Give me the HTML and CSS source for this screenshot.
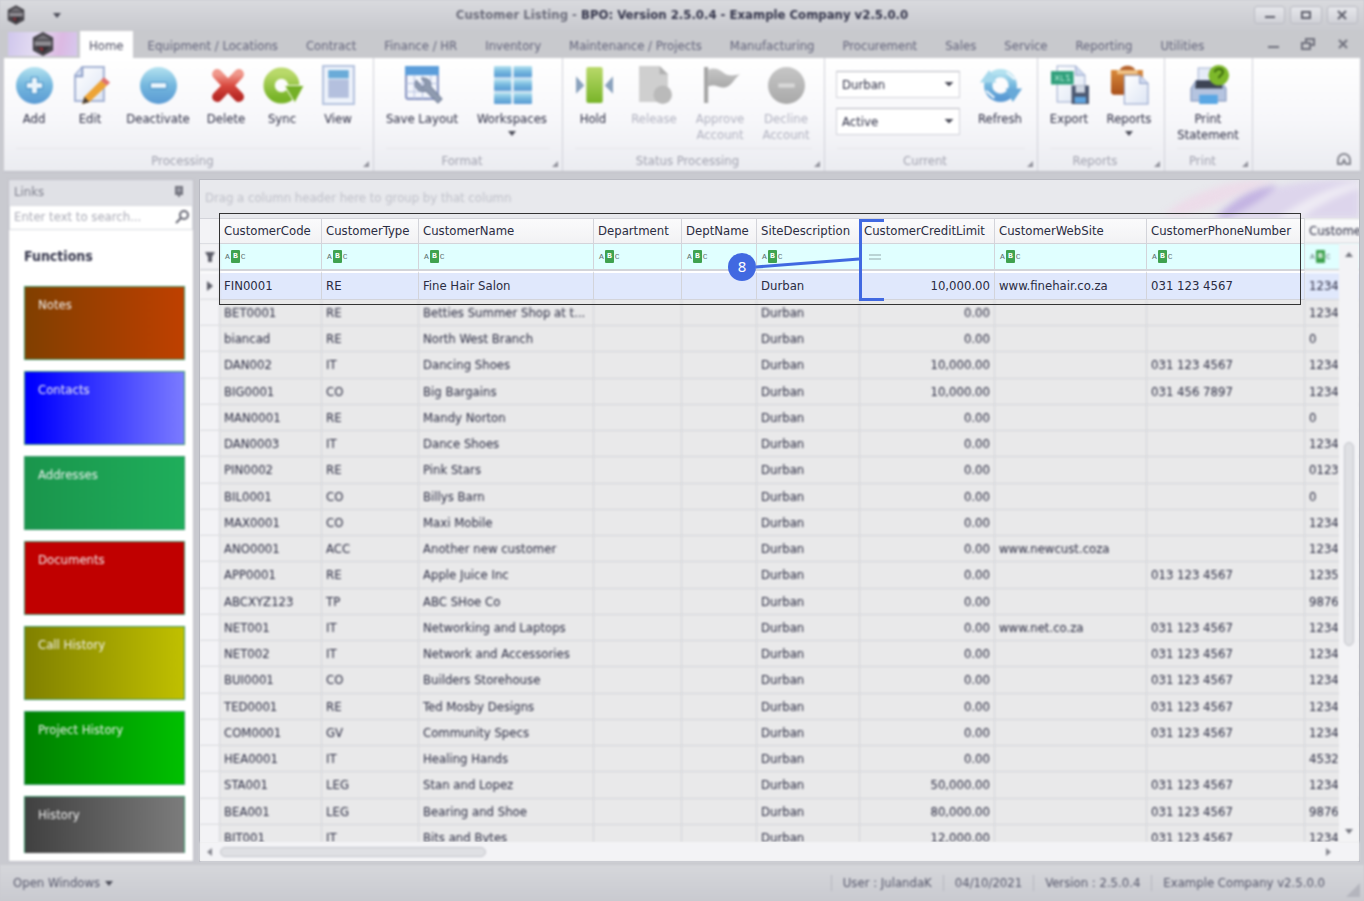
FILE: index.html
```html
<!DOCTYPE html>
<html lang="en">
<head>
<meta charset="utf-8">
<meta name="viewport" content="width=device-width, initial-scale=1">
<title>Customer Listing - BPO: Version 2.5.0.4 - Example Company v2.5.0.0</title>
<link rel="stylesheet" href="styles.css">
</head>
<body>
<svg class="defs" width="0" height="0" aria-hidden="true">
  <defs>
    <linearGradient id="blue" x1="0" y1="0" x2="0" y2="1"><stop offset="0" stop-color="#b4e2f0"/><stop offset=".5" stop-color="#74b7de"/><stop offset="1" stop-color="#5a9ad4"/></linearGradient>
    <linearGradient id="red" x1="0" y1="0" x2="0" y2="1"><stop offset="0" stop-color="#f0988c"/><stop offset=".5" stop-color="#d94a40"/><stop offset="1" stop-color="#b92a26"/></linearGradient>
    <linearGradient id="green" x1="0" y1="0" x2="0" y2="1"><stop offset="0" stop-color="#b9d96a"/><stop offset="1" stop-color="#78b428"/></linearGradient>
    <linearGradient id="paper" x1="0" y1="0" x2="1" y2="1"><stop offset="0" stop-color="#ffffff"/><stop offset="1" stop-color="#dde5f4"/></linearGradient>
    <linearGradient id="grey" x1="0" y1="0" x2="0" y2="1"><stop offset="0" stop-color="#c6c6c6"/><stop offset="1" stop-color="#a9a9a9"/></linearGradient>
    <linearGradient id="brown" x1="0" y1="0" x2="0" y2="1"><stop offset="0" stop-color="#d98a3c"/><stop offset="1" stop-color="#a9501a"/></linearGradient>
    <symbol id="hex" viewBox="0 0 24 26"><path d="M12 0 23 6v14l-11 6L1 20V6z" fill="#48464c"/><path d="M12 3 20 8H4z" fill="#77757b"/><path d="M3 10h18v5H3z" fill="#8f8d93"/><path d="M5 16h14l-7 7z" fill="#333137"/><path d="M7 17h5v4z" fill="#a03038"/></symbol>
  </defs>
</svg>

<div class="app">
  <header class="top soft">
    <div class="titlebar">
      <svg class="logo-small" aria-hidden="true"><use href="#hex"/></svg>
      <button class="quick" aria-label="Customize quick access"><i class="down"></i></button>
      <h1 class="title"><span>Customer Listing - </span>BPO: Version 2.5.0.4 - Example Company v2.5.0.0</h1>
      <div class="window-buttons">
        <button aria-label="Minimize"><svg width="12" height="10"><path d="M1 7h10" stroke="#5f606c" stroke-width="2"/></svg></button>
        <button aria-label="Maximize"><svg width="12" height="10"><path d="M2 2h8v6H2z" fill="none" stroke="#5f606c" stroke-width="2"/></svg></button>
        <button aria-label="Close"><svg width="12" height="10"><path d="M2 1l8 8M10 1 2 9" stroke="#5f606c" stroke-width="2"/></svg></button>
      </div>
    </div>
    <nav class="tabs">
      <button class="app-button" aria-label="Application menu"><svg width="24" height="24" aria-hidden="true"><use href="#hex"/></svg></button>
      <a class="tab active" href="#home">Home</a>
      <a class="tab" href="#equipment">Equipment / Locations</a>
      <a class="tab" href="#contract">Contract</a>
      <a class="tab" href="#finance">Finance / HR</a>
      <a class="tab" href="#inventory">Inventory</a>
      <a class="tab" href="#maintenance">Maintenance / Projects</a>
      <a class="tab" href="#manufacturing">Manufacturing</a>
      <a class="tab" href="#procurement">Procurement</a>
      <a class="tab" href="#sales">Sales</a>
      <a class="tab" href="#service">Service</a>
      <a class="tab" href="#reporting">Reporting</a>
      <a class="tab" href="#utilities">Utilities</a>
      <div class="child-buttons">
        <button aria-label="Minimize child"><svg width="14" height="12"><path d="M2 9h11" stroke="#6f707c" stroke-width="2"/></svg></button>
        <button aria-label="Restore child"><svg width="14" height="12"><path d="M5 4V1h8v6h-3M1 5h8v6H1z" fill="none" stroke="#6f707c" stroke-width="2"/></svg></button>
        <button aria-label="Close child"><svg width="14" height="12"><path d="M3 2l8 8M11 2l-8 8" stroke="#6f707c" stroke-width="2"/></svg></button>
      </div>
    </nav>
    <div class="ribbon">
      <section class="group g-processing">
        <div class="tools">
          <button class="tool"><svg viewBox="0 0 36 36"><circle cx="18" cy="19" r="18" fill="url(#blue)"/><path d="M15 11h6v5h5v6h-5v5h-6v-5h-5v-6h5z" fill="#e9f4fb" stroke="#4e93c8"/></svg>Add</button>
          <button class="tool"><svg viewBox="0 0 36 36"><path d="M10 1h21v33H3V9z" fill="url(#paper)" stroke="#a5b3d4" stroke-width="2"/><path d="M10 1v9H3" fill="#d5dff2" stroke="#8fa0c8" stroke-width="2"/><path d="m12 30 16-16 6 5-17 16-7 2z" fill="#eda436"/><path d="m28 14 3-3 6 5-3 3z" fill="#e0706c"/><path d="m12 30 5 5-7 2z" fill="#4b4038"/></svg>Edit</button>
          <button class="tool wide"><svg viewBox="0 0 36 36"><circle cx="18" cy="19" r="18" fill="url(#blue)"/><rect x="10" y="16" width="16" height="6" rx="1" fill="#e9f4fb" stroke="#4e93c8"/></svg>Deactivate</button>
          <button class="tool"><svg viewBox="0 0 36 36"><path d="M9 8 30 30M30 8 9 30" fill="none" stroke="url(#red)" stroke-width="10" stroke-linecap="round"/></svg>Delete</button>
          <button class="tool"><svg viewBox="0 0 36 36"><circle cx="17" cy="19" r="12" fill="none" stroke="url(#green)" stroke-width="11"/><path d="M20 19h19l-9 17z" fill="#74b026" stroke="#f4f9ea" stroke-width="1"/></svg>Sync</button>
          <button class="tool"><svg viewBox="0 0 36 36"><path d="M3 0h30v37H3z" fill="#eef3fb" stroke="#b4c2de" stroke-width="2"/><path d="M8 4h20v8H8z" fill="#6aabd8"/><path d="M8 13h20v18H8z" fill="#b4c0de"/></svg>View</button>
        </div>
        <h2>Processing</h2>
      </section>
      <section class="group g-format">
        <div class="tools">
          <button class="tool big"><svg viewBox="0 0 36 36"><rect x="2" y="1" width="31" height="31" rx="2" fill="#f3f6fc" stroke="#8592c0" stroke-width="2"/><path d="M1 0h33v9H1z" fill="#5b9dda"/><path d="M2 17h31M2 25h31M10 9v23M18 9v23M26 9v23" stroke="#b7c2e0" stroke-width="1"/><path d="M12 14a7 7 0 0 0 9 10l12 12 4-4-11-12a7 7 0 0 0-9-8l4 5-3 4z" fill="#8f9bb0" stroke="#75819a"/></svg>Save Layout</button>
          <button class="tool big"><svg viewBox="0 0 36 36"><g fill="url(#blue)"><rect x="0" y="0" width="17" height="11" rx="1"/><rect x="19" y="0" width="18" height="11" rx="1"/><rect x="0" y="13" width="17" height="11" rx="1"/><rect x="19" y="13" width="18" height="11" rx="1"/><rect x="0" y="26" width="17" height="11" rx="1"/><rect x="19" y="26" width="18" height="11" rx="1"/></g><path d="M0 12h37M0 25h37" stroke="#a9cce8" stroke-width="1"/></svg>Workspaces<i class="down"></i></button>
        </div>
        <h2>Format</h2>
      </section>
      <section class="group g-status">
        <div class="tools">
          <button class="tool"><svg viewBox="0 0 36 36"><rect x="11" y="1" width="16" height="35" rx="2" fill="url(#green)"/><path d="M1 10v17l8-8zM37 10v17l-8-8z" fill="#8aa2bd"/></svg>Hold</button>
          <button class="tool mid" disabled><svg viewBox="0 0 36 36"><path d="M3 0h20l8 8v27H3z" fill="#cfcfcf"/><path d="M23 0v8h8z" fill="#b0b0b0"/><circle cx="26" cy="28" r="9" fill="#bababa"/></svg>Release</button>
          <button class="tool mid" disabled><svg viewBox="0 0 36 36"><path d="M2 1h4v35H2z" fill="#a5a5a5"/><path d="M6 4c8-4 12 1 17 4 5 2 9 1 14 0-5 3-8 12-15 13-7 0-9-4-16-1z" fill="url(#grey)"/></svg>Approve<br>Account</button>
          <button class="tool mid" disabled><svg viewBox="0 0 36 36"><circle cx="18" cy="19" r="18" fill="url(#grey)"/><path d="M10 17h16v4H10z" fill="#d9d9d9"/></svg>Decline<br>Account</button>
        </div>
        <h2>Status Processing</h2>
      </section>
      <section class="group g-current">
        <div class="tools">
          <div class="pickers">
            <select aria-label="Branch"><option>Durban</option></select>
            <select aria-label="Status"><option>Active</option></select>
          </div>
          <button class="tool mid"><svg viewBox="0 0 36 36"><circle cx="18" cy="19" r="12" fill="none" stroke="url(#blue)" stroke-width="8"/><path d="M24 6l8 7M4 24l8 7" stroke="#f2f8fc" stroke-width="2"/><path d="M-2 16 7 4l7 12z" fill="#a5d8ec"/><path d="M23 22h16l-9 13z" fill="#68a9d8"/></svg>Refresh</button>
        </div>
        <h2>Current</h2>
      </section>
      <section class="group g-reports">
        <div class="tools">
          <button class="tool"><svg viewBox="0 0 36 36"><path d="M6 0h18l9 9v26H6z" fill="url(#paper)" stroke="#9aa9cc"/><path d="M24 0v9h9" fill="#cdd8ee" stroke="#9aa9cc"/><rect x="0" y="5" width="22" height="13" fill="#31a07c"/><path d="M4 9l4 5M8 9l-4 5M10 9v5h3M18 9h-3l3 5h-3" fill="none" stroke="#9fe0c8"/><rect x="20" y="19" width="17" height="18" fill="#4c5871"/><path d="M24 19h9v7h-9z" fill="#cfd6e2"/><path d="M23 30h11v6H23z" fill="#5fa3de"/></svg>Export</button>
          <button class="tool"><svg viewBox="0 0 36 36"><path d="M0 4h31v24H2L0 26z" fill="url(#brown)"/><path d="M8 5c2-7 14-7 16 0z" fill="#b5622c"/><path d="M6 4h20v4H6z" fill="#f0c285"/><path d="M13 9h15l8 8v20H13z" fill="url(#paper)" stroke="#8fa0c8"/><path d="M28 9v8h8" fill="#cfd9ee" stroke="#8fa0c8"/></svg>Reports<i class="down"></i></button>
        </div>
        <h2>Reports</h2>
      </section>
      <section class="group g-print">
        <div class="tools">
          <button class="tool wide"><svg viewBox="0 0 36 36"><path d="M8 2h20v16H8z" fill="#e6ecf7" stroke="#a3b2d2"/><path d="M6 14h24l5 8v12H1V22z" fill="#b5c4e0" stroke="#7d90b8"/><path d="M6 14h24l2 8H5z" fill="#3d4454"/><path d="M9 28h18v9H9z" fill="#5aa7e4"/><circle cx="28" cy="9" r="10" fill="#7db82a"/><path d="M24 6c1-4 8-4 8 0 0 3-4 3-4 6" fill="none" stroke="#3f6d10" stroke-width="2"/></svg>Print<br>Statement</button>
        </div>
        <h2>Print</h2>
      </section>
      <button class="collapse" aria-label="Collapse ribbon"><svg width="16" height="14"><path d="M2 12V8a6 6 0 0 1 12 0v4h-4l-2-4-2 4z" fill="none" stroke="#85868f" stroke-width="2"/></svg></button>
    </div>
  </header>

  <main class="main">
    <aside class="links soft">
      <div class="links-head"><h2>Links</h2><svg width="10" height="12" aria-hidden="true"><path d="M2 1h6v6H2zM1 8h8M5 8v3" fill="#9a9ba6" stroke="#74757f" stroke-width="2"/></svg></div>
      <div class="search"><input type="text" placeholder="Enter text to search..." aria-label="Search links"><svg width="14" height="14" aria-hidden="true"><circle cx="9" cy="5" r="4" fill="none" stroke="#666773" stroke-width="2"/><path d="M6 8 1 13" stroke="#666773" stroke-width="2"/></svg></div>
      <h3>Functions</h3>
      <div class="tiles">
        <button class="tile notes">Notes</button>
        <button class="tile contacts">Contacts</button>
        <button class="tile addresses">Addresses</button>
        <button class="tile documents">Documents</button>
        <button class="tile calls">Call History</button>
        <button class="tile projects">Project History</button>
        <button class="tile history">History</button>
      </div>
    </aside>

    <section class="grid">
      <div class="group-panel">
        <svg class="swoosh" viewBox="0 0 220 38" aria-hidden="true"><path d="M25 34C50 14 85 2 115 0h24c-34 10-60 26-84 32-10 4-20 4-30 2z" fill="#ecdce9"/><path d="M72 38C98 14 140 3 190 0h30v38z" fill="#ddd5ec"/><path d="M78 38C96 16 116 8 138 5c-10 12-30 24-50 33z" fill="#c3b3e2"/><path d="M138 38C165 20 190 6 220 2v6c-24 8-44 20-58 30z" fill="#eeebf4"/></svg>
        <p class="soft">Drag a column header here to group by that column</p>
      </div>
      <div class="viewport">
        <table>
          <colgroup><col class="c-mark"><col class="c-code"><col class="c-type"><col class="c-name"><col class="c-dept"><col class="c-dname"><col class="c-site"><col class="c-credit"><col class="c-web"><col class="c-phone"><col class="c-last"></colgroup>
          <thead>
            <tr class="head"><th></th><th>CustomerCode</th><th>CustomerType</th><th>CustomerName</th><th>Department</th><th>DeptName</th><th>SiteDescription</th><th>CustomerCreditLimit</th><th>CustomerWebSite</th><th>CustomerPhoneNumber</th><th class="soft">Custome</th></tr>
            <tr class="filter"><td class="mark soft"><svg width="10" height="10"><path d="M0 0h10L7 5v5H3V5z" fill="#5c5d68"/></svg></td><td><span class="abc">A<b>B</b>C</span></td><td><span class="abc">A<b>B</b>C</span></td><td><span class="abc">A<b>B</b>C</span></td><td><span class="abc">A<b>B</b>C</span></td><td><span class="abc">A<b>B</b>C</span></td><td><span class="abc">A<b>B</b>C</span></td><td><svg class="equals" width="12" height="6" role="img" aria-label="Equals"><path d="M0 1h12M0 5h12" stroke="#93a8ab"/></svg></td><td><span class="abc">A<b>B</b>C</span></td><td><span class="abc">A<b>B</b>C</span></td><td class="soft"><span class="abc">A<b>B</b>C</span></td></tr>
          </thead>
          <tbody>
            <tr class="current"><td class="mark soft"><svg width="8" height="10"><path d="M1 0l6 5-6 5z" fill="#5c5d68"/></svg></td><td>FIN0001</td><td>RE</td><td>Fine Hair Salon</td><td></td><td></td><td>Durban</td><td>10,000.00</td><td>www.finehair.co.za</td><td>031 123 4567</td><td class="soft">1234</td></tr>
            <tr><td></td><td>BET0001</td><td>RE</td><td>Betties Summer Shop at t...</td><td></td><td></td><td>Durban</td><td>0.00</td><td></td><td></td><td>1234</td></tr>
            <tr><td></td><td>biancad</td><td>RE</td><td>North West Branch</td><td></td><td></td><td>Durban</td><td>0.00</td><td></td><td></td><td>0</td></tr>
            <tr><td></td><td>DAN002</td><td>IT</td><td>Dancing Shoes</td><td></td><td></td><td>Durban</td><td>10,000.00</td><td></td><td>031 123 4567</td><td>1234</td></tr>
            <tr><td></td><td>BIG0001</td><td>CO</td><td>Big Bargains</td><td></td><td></td><td>Durban</td><td>10,000.00</td><td></td><td>031 456 7897</td><td>1234</td></tr>
            <tr><td></td><td>MAN0001</td><td>RE</td><td>Mandy Norton</td><td></td><td></td><td>Durban</td><td>0.00</td><td></td><td></td><td>0</td></tr>
            <tr><td></td><td>DAN0003</td><td>IT</td><td>Dance Shoes</td><td></td><td></td><td>Durban</td><td>0.00</td><td></td><td></td><td>1234</td></tr>
            <tr><td></td><td>PIN0002</td><td>RE</td><td>Pink Stars</td><td></td><td></td><td>Durban</td><td>0.00</td><td></td><td></td><td>0123</td></tr>
            <tr><td></td><td>BIL0001</td><td>CO</td><td>Billys Barn</td><td></td><td></td><td>Durban</td><td>0.00</td><td></td><td></td><td>0</td></tr>
            <tr><td></td><td>MAX0001</td><td>CO</td><td>Maxi Mobile</td><td></td><td></td><td>Durban</td><td>0.00</td><td></td><td></td><td>1234</td></tr>
            <tr><td></td><td>ANO0001</td><td>ACC</td><td>Another new customer</td><td></td><td></td><td>Durban</td><td>0.00</td><td>www.newcust.coza</td><td></td><td>1234</td></tr>
            <tr><td></td><td>APP0001</td><td>RE</td><td>Apple Juice Inc</td><td></td><td></td><td>Durban</td><td>0.00</td><td></td><td>013 123 4567</td><td>1235</td></tr>
            <tr><td></td><td>ABCXYZ123</td><td>TP</td><td>ABC SHoe Co</td><td></td><td></td><td>Durban</td><td>0.00</td><td></td><td></td><td>9876</td></tr>
            <tr><td></td><td>NET001</td><td>IT</td><td>Networking and Laptops</td><td></td><td></td><td>Durban</td><td>0.00</td><td>www.net.co.za</td><td>031 123 4567</td><td>1234</td></tr>
            <tr><td></td><td>NET002</td><td>IT</td><td>Network and Accessories</td><td></td><td></td><td>Durban</td><td>0.00</td><td></td><td>031 123 4567</td><td>1234</td></tr>
            <tr><td></td><td>BUI0001</td><td>CO</td><td>Builders Storehouse</td><td></td><td></td><td>Durban</td><td>0.00</td><td></td><td>031 123 4567</td><td>1234</td></tr>
            <tr><td></td><td>TED0001</td><td>RE</td><td>Ted Mosby Designs</td><td></td><td></td><td>Durban</td><td>0.00</td><td></td><td>031 123 4567</td><td>1234</td></tr>
            <tr><td></td><td>COM0001</td><td>GV</td><td>Community Specs</td><td></td><td></td><td>Durban</td><td>0.00</td><td></td><td>031 123 4567</td><td>1234</td></tr>
            <tr><td></td><td>HEA0001</td><td>IT</td><td>Healing Hands</td><td></td><td></td><td>Durban</td><td>0.00</td><td></td><td></td><td>4532</td></tr>
            <tr><td></td><td>STA001</td><td>LEG</td><td>Stan and Lopez</td><td></td><td></td><td>Durban</td><td>50,000.00</td><td></td><td>031 123 4567</td><td>1234</td></tr>
            <tr><td></td><td>BEA001</td><td>LEG</td><td>Bearing and Shoe</td><td></td><td></td><td>Durban</td><td>80,000.00</td><td></td><td>031 123 4567</td><td>9876</td></tr>
            <tr><td></td><td>BIT001</td><td>IT</td><td>Bits and Bytes</td><td></td><td></td><td>Durban</td><td>12,000.00</td><td></td><td>031 123 4567</td><td>1234</td></tr>
          </tbody>
        </table>
        <div class="vscroll soft"><i class="up"></i><span class="vthumb"></span><i class="down"></i></div>
      </div>
      <div class="hscroll soft"><i class="left"></i><span class="hthumb"></span><i class="right"></i></div>
      <div class="callout-box"></div>
      <svg class="callout" width="150" height="88" role="img" aria-label="Callout 8"><path d="M28 52 131 44" stroke="#4169e1" stroke-width="3"/><circle cx="14" cy="52" r="14" fill="#4169e1"/><text x="14" y="57" text-anchor="middle">8</text></svg>
      <div class="bracket"></div>
    </section>
  </main>

  <footer class="status soft">
    <button class="open-windows">Open Windows <i class="down"></i></button>
    <span>User : JulandaK</span>
    <span>04/10/2021</span>
    <span>Version : 2.5.0.4</span>
    <span>Example Company v2.5.0.0</span>
    <svg class="grip" width="14" height="14" aria-hidden="true"><path d="M14 0v14H0z" fill="#b4b5bd"/></svg>
  </footer>
</div>
</body>
</html>
```

FILE: styles.css
```css
* { box-sizing: border-box; }

body {
  margin: 0;
  background: #c9cad0;
  color: #2b2c42;
  font: 13px/16px "DejaVu Sans Condensed", Tahoma, "DejaVu Sans", sans-serif;
}

button, input, select { font: inherit; color: inherit; }
button { border: 0; padding: 0; background: none; }
h1, h2, h3, p { margin: 0; font-size: 13px; font-weight: normal; }
.defs { position: absolute; }
.soft { filter: blur(1px); }

.app { display: flex; flex-direction: column; height: 100vh; }

.down, .up, .left, .right { display: block; width: 0; height: 0; border: 4px solid transparent; }
.down { border-top: 5px solid #4b4c58; border-bottom: 0; }
.up { border-bottom: 5px solid #75767f; border-top: 0; }
.left { border-right: 5px solid #85868f; border-left: 0; }
.right { border-left: 5px solid #85868f; border-right: 0; }

/* Title bar and tabs */
.top { flex: none; }
.titlebar {
  display: grid;
  grid-template-columns: 110px 1fr 110px;
  align-items: center;
  grid-template-rows: 30px;
  background: linear-gradient(#d9dade, #c9cacf);
}
.logo-small { grid-area: 1 / 1; width: 18px; height: 20px; margin-left: 7px; }
.quick { grid-area: 1 / 1; justify-self: start; margin-left: 53px; }
.title { text-align: center; font-weight: bold; color: #33344a; }
.title span { color: #6d6e7c; }
.window-buttons { display: flex; gap: 5px; justify-content: flex-end; padding-right: 6px; }
.window-buttons button {
  width: 33px; height: 18px;
  border: 1px solid #b9bac2; border-radius: 3px;
  background: linear-gradient(#e6e7eb, #d0d1d7);
}
.window-buttons svg { display: block; margin: auto; }

.tabs { display: flex; height: 28px; padding: 0 4px; background: #c8c9cd; align-items: flex-end; }
.app-button {
  width: 69px; height: 24px; margin: 0 3px 2px 4px;
  background: linear-gradient(100deg, #cfc6ec, #e4dcf2 40%, #dcb9e2 75%, #d6c8ee);
}
.app-button svg { display: block; margin: auto; }
.tab { padding: 7px 14px 4px; height: 27px; color: #62637a; text-decoration: none; white-space: nowrap; }
.tab.active { padding: 7px 9px 4px; margin-right: 1px; background: #fff; color: #4b4c60; }
.child-buttons { display: flex; gap: 21px; margin-left: auto; padding: 0 10px 8px 0; }
.child-buttons svg { display: block; }

/* Ribbon */
.ribbon {
  display: flex;
  height: 114px;
  margin: 0 4px;
  background: linear-gradient(#fff, #f7f7fa 55%, #ebecf1);
  border-bottom: 1px solid #b9bac2;
}
.group {
  position: relative;
  display: flex; flex-direction: column; justify-content: space-between;
  border-right: 1px solid #cfd0d8;
}
.group::after {
  content: "";
  position: absolute; right: 4px; bottom: 4px;
  border: 3px solid transparent;
  border-right-color: #8f909a; border-bottom-color: #8f909a;
}
.group h2 {
  margin: 0 12px; padding: 4px 12px 2px 0;
  border-top: 1px solid #e6e7eb;
  text-align: center; color: #a0a1ae;
}
.tools { display: flex; padding-top: 8px; }
.g-processing { width: 370px; } .g-processing .tools { padding-left: 2px; }
.g-format { width: 189px; } .g-format .tools { padding-left: 3px; }
.g-status { width: 262px; } .g-status .tools { padding-left: 2px; }
.g-current { width: 213px; } .g-current .tools { padding-left: 11px; }
.g-reports { width: 127px; } .g-reports .tools { padding-left: 3px; gap: 4px; }
.g-print { width: 88px; } .g-print .tools { padding-left: 3px; }
.tool {
  display: flex; flex-direction: column; align-items: center;
  width: 56px; text-align: center; white-space: nowrap;
}
.tool svg { width: 37px; height: 37px; margin-bottom: 8px; overflow: visible; }
.tool .down { margin-top: 4px; }
.tool:disabled { color: #b0b1bf; }
.tool.mid { width: 66px; }
.tool.wide { width: 80px; }
.tool.big { width: 90px; }
.pickers { display: flex; flex-direction: column; gap: 10px; padding: 5px 7px 0 0; }
.pickers select {
  appearance: none;
  width: 124px; height: 27px; padding: 0 5px;
  border: 1px solid #d0d1d8; border-top-color: #b4b5bd; border-radius: 0;
  background: linear-gradient(135deg, #4b4c58 50%, transparent 50%) right 6px center / 4px 5px no-repeat,
              linear-gradient(225deg, #4b4c58 50%, transparent 50%) right 10px center / 4px 5px no-repeat, #fff;
}
.collapse { margin: auto 8px 5px auto; }
.collapse svg { display: block; }

/* Main area */
.main { display: flex; flex: 1; min-height: 0; gap: 5px; padding: 7px 4px 3px 8px; }
.links {
  display: flex; flex-direction: column; flex: none;
  width: 186px; padding-bottom: 8px;
  background: #fff; border: 1px solid #c0c1c9;
}
.links-head {
  display: flex; align-items: center; justify-content: space-between;
  height: 25px; padding: 0 9px 0 5px;
  background: #e0e1e6; color: #7d7e8b;
}
.search { display: flex; align-items: center; height: 25px; padding: 0 3px 0 4px; border: 1px solid #d9dae0; }
.search input { flex: 1; min-width: 0; padding: 0; border: 0; outline: 0; background: none; }
.search input::placeholder { color: #a9aab5; opacity: 1; }
.links h3 { padding: 17px 15px 21px; font-size: 14px; line-height: 18px; font-weight: bold; color: #33344a; }
.tiles { display: flex; flex-direction: column; gap: 11px; overflow: hidden; padding: 0 8px 0 15px; }
.tile {
  flex: none; display: flex; height: 74px; padding: 10px 13px;
  border: 1px solid #3c9a6c; color: #f2f2f2;
}
.tile:last-child { height: 58px; }
.notes { background: linear-gradient(90deg, #803f00, #bf4000); }
.contacts { background: linear-gradient(90deg, #0000ff 5%, #7b7bff); }
.addresses { background: linear-gradient(90deg, #1a954c, #1fae5b); }
.documents { background: #c00000; }
.calls { background: linear-gradient(90deg, #808000, #c0c000); }
.projects { background: linear-gradient(90deg, #008000, #00c000); }
.history { background: linear-gradient(90deg, #404040, #7c7c7c); }

/* Data grid */
.grid {
  position: relative;
  display: flex; flex-direction: column; flex: 1; min-width: 0;
  border: 1px solid #b9bac2; background: #e9e9ea;
}
.group-panel { position: relative; flex: none; height: 38px; padding: 10px 5px; overflow: hidden; background: #e8e9ed; color: #bfc0c9; }
.swoosh { position: absolute; right: 0; top: 0; width: 220px; height: 38px; filter: blur(3px); }
.viewport { position: relative; flex: 1; min-height: 0; overflow: hidden; }
table { width: 1185px; table-layout: fixed; border-spacing: 0; }
.c-mark { width: 20px; } .c-code { width: 102px; } .c-type { width: 97px; }
.c-name { width: 175px; } .c-dept { width: 88px; } .c-dname { width: 75px; }
.c-site { width: 103px; } .c-credit { width: 135px; } .c-web { width: 152px; }
.c-phone { width: 158px; } .c-last { width: 80px; }
th, td {
  height: 26px; padding: 0 4px;
  border-right: 1px solid #d3d4da; border-bottom: 1px solid #d3d4da;
  text-align: left; font-weight: normal;
  white-space: nowrap; overflow: hidden; text-overflow: ellipsis;
}
.head th { background: linear-gradient(#fbfbfc, #f2f2f4); border-top: 1px solid #d3d4da; }
.filter td { height: 27px; background: #e0ffff; border-bottom: 2px solid #d3d4da; }
.current td { height: 29px; background: #e0e8fc; border-top: 2px solid #fff; }
tbody td:nth-child(8) { text-align: right; }
tbody tr:not(.current) td { filter: blur(1px); }
tbody tr:nth-child(4n) td { height: 27px; }
tbody td:first-child, .head th:first-child, .filter .mark { padding: 0; text-align: center; background: #f3f3f6; }
.mark svg { display: block; margin: auto; }
.abc { display: flex; align-items: center; gap: 1px; padding-left: 1px; font: 8px/12px "Liberation Mono", monospace; color: #5d7070; }
.abc b { width: 9px; height: 13px; border-radius: 1px; background: #3fa24f; color: #fff; text-align: center; }
.equals { display: block; margin-left: 5px; }

.vscroll {
  position: absolute; top: 26px; right: 0; bottom: 0; width: 20px;
  display: flex; flex-direction: column; align-items: center;
  padding: 8px 0; background: #f3f3f6;
}
.vscroll .down { border-top-color: #75767f; }
.vthumb { width: 10px; height: 204px; margin: 185px auto auto; border: 1px solid #c3c4cb; border-radius: 5px; background: #dfe0e4; }
.hscroll { display: flex; align-items: center; flex: none; height: 19px; padding: 0 28px 0 7px; background: #f3f3f6; }
.hthumb { width: 266px; height: 10px; margin: 0 auto 0 8px; border: 1px solid #c3c4cb; border-radius: 5px; background: #dfe0e4; }

/* Callout drawn over the grid */
.callout-box { position: absolute; left: 19px; top: 33px; width: 1082px; height: 92px; border: 1px solid #333; }
.callout { position: absolute; left: 528px; top: 35px; }
.callout text { fill: #fff; font: 15px "Noto Sans", sans-serif; }
.bracket { position: absolute; left: 659px; top: 39px; width: 25px; height: 82px; border: 3px solid #4169e1; border-right: 0; }

/* Status bar */
.status {
  display: flex; align-items: center; flex: none; position: relative;
  height: 36px; padding: 0 28px 0 13px;
  background: linear-gradient(#d6d7db, #c9cad0);
  color: #55566a;
}
.open-windows { display: flex; align-items: center; gap: 5px; margin-right: auto; }
.status span { padding: 0 11px; border-left: 1px solid #b5b6be; }
.grip { position: absolute; right: 4px; bottom: 4px; }
```
